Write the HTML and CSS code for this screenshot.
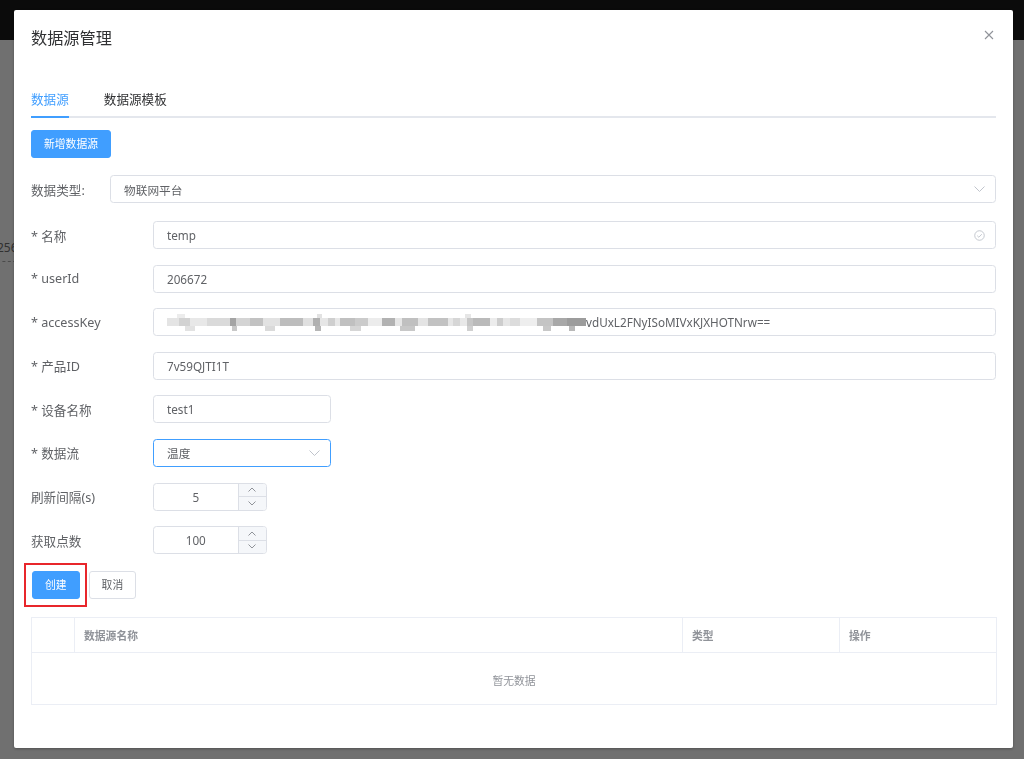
FILE: index.html
```html
<!DOCTYPE html>
<html lang="zh-CN">
<head>
<meta charset="utf-8">
<title>数据源管理</title>
<link rel="stylesheet" href="styles.css">
</head>
<body>
<div class="page">
  <div class="page-header"></div>
  <div class="page-body"><span class="bg-text">256</span></div>
</div>
<div class="mask"></div>
<div class="dialog">
  <div class="dialog-header">
    <span class="dialog-title">数据源管理</span>
    <button class="dialog-close" aria-label="关闭">
      <svg width="10" height="10" viewBox="0 0 10 10"><path d="M1 1L9 9M9 1L1 9" stroke="#909399" stroke-width="1.1" fill="none"/></svg>
    </button>
  </div>
  <div class="dialog-body">
    <div class="tabs">
      <div class="tab active">数据源</div>
      <div class="tab">数据源模板</div>
    </div>
    <button class="btn btn-primary btn-add">新增数据源</button>
    <div class="type-row">
      <span class="type-label">数据类型:</span>
      <div class="control select">
        <span class="control-text">物联网平台</span>
        <svg class="suffix" width="11" height="6" viewBox="0 0 11 6"><path d="M0.5 0.5L5.5 5.5L10.5 0.5" fill="none" stroke="#c0c4cc"/></svg>
      </div>
    </div>
    <div class="form">
      <div class="form-row">
        <span class="form-label">* 名称</span>
        <div class="control grow">
          <span class="control-text">temp</span>
          <svg class="suffix" width="11" height="11" viewBox="0 0 12 12"><circle cx="6" cy="6" r="5.2" fill="none" stroke="#c0c4cc"/><path d="M3.5 6.2L5.3 7.9L8.5 4.6" fill="none" stroke="#c0c4cc"/></svg>
        </div>
      </div>
      <div class="form-row">
        <span class="form-label">* userId</span>
        <div class="control grow"><span class="control-text">206672</span></div>
      </div>
      <div class="form-row">
        <span class="form-label">* accessKey</span>
        <div class="control grow"><span class="mosaic"></span><span class="control-text">vdUxL2FNyISoMIVxKJXHOTNrw==</span></div>
      </div>
      <div class="form-row">
        <span class="form-label">* 产品ID</span>
        <div class="control grow"><span class="control-text">7v59QJTI1T</span></div>
      </div>
      <div class="form-row">
        <span class="form-label">* 设备名称</span>
        <div class="control medium"><span class="control-text">test1</span></div>
      </div>
      <div class="form-row">
        <span class="form-label">* 数据流</span>
        <div class="control medium focused">
          <span class="control-text">温度</span>
          <svg class="suffix" width="11" height="6" viewBox="0 0 11 6"><path d="M0.5 0.5L5.5 5.5L10.5 0.5" fill="none" stroke="#c0c4cc"/></svg>
        </div>
      </div>
      <div class="form-row">
        <span class="form-label">刷新间隔(s)</span>
        <div class="number">
          <span class="number-value">5</span>
          <div class="spinner">
            <span class="spin"><svg width="8" height="5" viewBox="0 0 8 5"><path d="M0.5 4.5L4 1L7.5 4.5" fill="none" stroke="#909399"/></svg></span>
            <span class="spin"><svg width="8" height="5" viewBox="0 0 8 5"><path d="M0.5 0.5L4 4L7.5 0.5" fill="none" stroke="#909399"/></svg></span>
          </div>
        </div>
      </div>
      <div class="form-row">
        <span class="form-label">获取点数</span>
        <div class="number">
          <span class="number-value">100</span>
          <div class="spinner">
            <span class="spin"><svg width="8" height="5" viewBox="0 0 8 5"><path d="M0.5 4.5L4 1L7.5 4.5" fill="none" stroke="#909399"/></svg></span>
            <span class="spin"><svg width="8" height="5" viewBox="0 0 8 5"><path d="M0.5 0.5L4 4L7.5 0.5" fill="none" stroke="#909399"/></svg></span>
          </div>
        </div>
      </div>
    </div>
    <div class="actions">
      <span class="highlight"><button class="btn btn-primary">创建</button></span>
      <button class="btn btn-default">取消</button>
    </div>
    <table class="table">
      <colgroup><col class="c1"><col class="c2"><col class="c3"><col class="c4"></colgroup>
      <thead>
        <tr><th></th><th>数据源名称</th><th>类型</th><th>操作</th></tr>
      </thead>
      <tbody>
        <tr><td class="empty" colspan="4">暂无数据</td></tr>
      </tbody>
    </table>
  </div>
</div>
</body>
</html>
```
FILE: styles.css
```css
* { box-sizing: border-box; }
html, body { margin: 0; padding: 0; }
body {
  width: 1024px;
  height: 759px;
  overflow: hidden;
  font-family: "Noto Sans", "Noto Sans CJK SC", sans-serif;
  background: #ffffff;
  color: #606266;
}
.page-header { height: 40px; background: #191919; }
.page-body { padding-top: 200px; }
.bg-text {
  display: block;
  margin-left: -3px;
  width: 30px;
  white-space: nowrap;
  font-size: 12px;
  line-height: 16px;
  color: #707070;
  padding-bottom: 5px;
  border-bottom: 1px dashed #aaa;
}
.mask {
  position: fixed;
  inset: 0;
  background: rgba(0, 0, 0, 0.56);
}
.dialog {
  position: fixed;
  left: 14px;
  top: 10px;
  width: 999px;
  height: 738px;
  background: #fff;
  border-radius: 2px;
  box-shadow: 0 1px 3px rgba(0, 0, 0, 0.3);
  padding: 0 17px;
}
.dialog-header {
  display: flex;
  justify-content: space-between;
  align-items: flex-start;
  padding-top: 17px;
}
.dialog-title {
  font-size: 16.2px;
  line-height: 22px;
  color: #303133;
}
.dialog-close {
  border: 0;
  background: none;
  padding: 0;
  margin: 3px 2px 0 0;
  width: 10px;
  height: 10px;
  display: flex;
}
.dialog-body { padding-top: 33px; }
.tabs {
  display: flex;
  box-shadow: inset 0 -2px 0 #e4e7ed;
}
.tab {
  height: 36px;
  line-height: 36px;
  font-size: 12.6px;
  color: #303133;
  margin-right: 35px;
}
.tab.active {
  color: #409eff;
  box-shadow: inset 0 -2px 0 #409eff;
}
.btn {
  height: 28px;
  border-radius: 3px;
  font-family: inherit;
  font-size: 10.8px;
  padding: 0 12px;
  border: 1px solid #dcdfe6;
  background: #fff;
  color: #606266;
  line-height: 26px;
}
.btn-primary {
  background: #409eff;
  border-color: #409eff;
  color: #fff;
}
.btn-add { margin-top: 12px; display: block; }
.type-row {
  margin-top: 17px;
  display: flex;
  align-items: center;
}
.type-label {
  width: 79px;
  font-size: 12.6px;
  color: #606266;
}
.control {
  height: 28px;
  border: 1px solid #dcdfe6;
  border-radius: 3.5px;
  background: #fff;
  display: flex;
  align-items: center;
  padding: 0 10px 0 13px;
  font-size: 11.7px;
  color: #606266;
}
.select { flex: 1; }
.grow { flex: 1; }
.medium { width: 178px; }
.focused { border-color: #409eff; }
.control-text { flex: 0 0 auto; }
.suffix { margin-left: auto; flex: 0 0 auto; }
.form {
  margin-top: 18px;
  display: flex;
  flex-direction: column;
  gap: 15.6px;
}
.form-row {
  display: flex;
  align-items: center;
  height: 28px;
}
.form-label {
  width: 122px;
  flex: 0 0 122px;
  font-size: 12.6px;
  color: #606266;
}
.mosaic {
  flex: 0 0 auto;
  width: 421px;
  height: 18px;
  margin-left: -2px;
  background:
    linear-gradient(90deg,
      transparent 0, transparent 2px, #e4e4e4 2px, #e4e4e4 14px, #d2d2d2 14px, #d2d2d2 25px, #e8e8e8 25px, #e8e8e8 42px,
      #dadada 42px, #dadada 65px, #a4a4a4 65px, #a4a4a4 71px, #d4d4d4 71px, #d4d4d4 85px, #c2c2c2 85px, #c2c2c2 98px,
      #e2e2e2 98px, #e2e2e2 115px, #bdbdbd 115px, #bdbdbd 138px, #e0e0e0 138px, #e0e0e0 148px, #b0b0b0 148px, #b0b0b0 155px,
      #e6e6e6 155px, #e6e6e6 163px, #cfcfcf 163px, #cfcfcf 170px, #e8e8e8 170px, #e8e8e8 175px, #c0c0c0 175px, #c0c0c0 190px,
      #cbcbcb 190px, #cbcbcb 203px, #ececec 203px, #ececec 217px, #b2b2b2 217px, #b2b2b2 230px, #e6e6e6 230px, #e6e6e6 237px,
      #c0c0c0 237px, #c0c0c0 253px, #e4e4e4 253px, #e4e4e4 263px, #c2c2c2 263px, #c2c2c2 283px, #e6e6e6 283px, #e6e6e6 288px,
      #d6d6d6 288px, #d6d6d6 295px, #e8e8e8 295px, #e8e8e8 302px, #c6c6c6 302px, #c6c6c6 308px, #bababa 308px, #bababa 325px,
      #ececec 325px, #ececec 332px, #cdcdcd 332px, #cdcdcd 338px, #e6e6e6 338px, #e6e6e6 345px, #dcdcdc 345px, #dcdcdc 355px,
      #eeeeee 355px, #eeeeee 372px, #c4c4c4 372px, #c4c4c4 388px, #a8a8a8 388px, #a8a8a8 402px, #9c9c9c 402px, #9c9c9c 421px)
      0 5px / 421px 8px no-repeat,
    linear-gradient(90deg,
      transparent 0, transparent 20px, #e2e2e2 20px, #e2e2e2 30px, transparent 30px, transparent 67px, #c8c8c8 67px, #c8c8c8 72px,
      transparent 72px, transparent 100px, #dadada 100px, #dadada 110px, transparent 110px, transparent 150px, #b6b6b6 150px, #b6b6b6 156px,
      transparent 156px, transparent 185px, #d6d6d6 185px, #d6d6d6 196px, transparent 196px, transparent 235px, #c8c8c8 235px, #c8c8c8 250px,
      transparent 250px, transparent 302px, #d0d0d0 302px, #d0d0d0 308px, transparent 308px, transparent 378px, #c8c8c8 378px, #c8c8c8 386px,
      transparent 386px, transparent 404px, #b8b8b8 404px, #b8b8b8 410px, transparent 410px)
      0 13px / 421px 5px no-repeat,
    linear-gradient(90deg,
      transparent 0, transparent 12px, #ececec 12px, #ececec 20px, transparent 20px, transparent 152px, #e2e2e2 152px, #e2e2e2 157px,
      transparent 157px, transparent 300px, #e6e6e6 300px, #e6e6e6 306px, transparent 306px)
      0 1px / 421px 4px no-repeat;
}
.number {
  width: 113.5px;
  height: 28px;
  border: 1px solid #dcdfe6;
  border-radius: 3.5px;
  display: flex;
  overflow: hidden;
}
.number-value {
  flex: 1;
  text-align: center;
  line-height: 26px;
  font-size: 11.7px;
  color: #606266;
}
.spinner {
  width: 28px;
  display: flex;
  flex-direction: column;
  border-left: 1px solid #dcdfe6;
  background: #f5f7fa;
}
.spin {
  flex: 1;
  display: flex;
  align-items: center;
  justify-content: center;
}
.spin + .spin { border-top: 1px solid #dcdfe6; }
.actions {
  margin-top: 17px;
  display: flex;
  gap: 9px;
  padding-left: 1px;
}
.highlight {
  position: relative;
  display: flex;
}
.highlight::before {
  content: "";
  position: absolute;
  left: -8.5px;
  top: -8.5px;
  right: -7.5px;
  bottom: -8px;
  border: 2px solid #e8262b;
}
.table {
  margin-top: 18px;
  width: 965px;
  border-collapse: collapse;
  table-layout: fixed;
  border: 1px solid #ebeef5;
}
.c1 { width: 43px; }
.c2 { width: 608px; }
.c3 { width: 157px; }
.c4 { width: 157px; }
.table th {
  height: 35px;
  padding: 0 9px;
  text-align: left;
  font-size: 10.8px;
  font-weight: 700;
  color: #909399;
  border-right: 1px solid #ebeef5;
  border-bottom: 1px solid #ebeef5;
  font-family: "Noto Sans CJK SC", sans-serif;
}
.table .empty {
  height: 52px;
  text-align: center;
  font-size: 10.8px;
  color: #909399;
  padding-top: 3px;
  font-family: "Noto Sans CJK SC", sans-serif;
}
```
